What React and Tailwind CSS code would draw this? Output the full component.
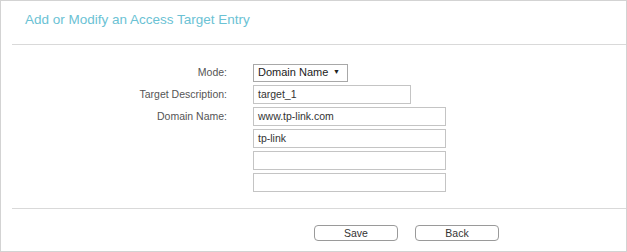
import React from "react";

const rows = [
  { label: "Mode:", kind: "select", value: "Domain Name" },
  { label: "Target Description:", kind: "input", value: "target_1", width: "w-[158px]" },
  { label: "Domain Name:", kind: "input", value: "www.tp-link.com", width: "w-[193px]" },
  { label: "", kind: "input", value: "tp-link", width: "w-[193px]" },
  { label: "", kind: "input", value: "", width: "w-[193px]" },
  { label: "", kind: "input", value: "", width: "w-[193px]" },
];

function Field({ row }) {
  if (row.kind === "select") {
    return (
      <div className="flex h-[18px] w-[95px] items-center justify-between border border-[#a8a8a8] bg-white pl-[4px] pr-[7px] text-[11px] text-[#222]">
        <span>{row.value}</span>
        <span className="text-[7px] text-[#222]">▼</span>
      </div>
    );
  }
  return (
    <div className={`flex h-[19px] ${row.width} items-center border border-[#c4c4c4] bg-white px-[4px] text-[10.5px] text-[#333]`}>
      {row.value}
    </div>
  );
}

export default function App() {
  return (
    <div className="h-[252px] w-[627px] overflow-hidden border border-[#d3d3d3] bg-white font-['Liberation_Sans',Arial,sans-serif]">
      <div className="h-[43px] pl-[24px] pt-[9px] text-[13.5px] text-[#6bc2d4]">
        Add or Modify an Access Target Entry
      </div>
      <div className="ml-[11px] border-t border-[#d9d9d9]" />

      <div className="mt-[18px] flex flex-col gap-[3px]">
        {rows.map((row, idx) => (
          <div key={idx} className="grid h-[19px] grid-cols-[226px_1fr] items-center gap-x-[26px]">
            <div className="text-right text-[10.5px] text-[#555]">{row.label}</div>
            <Field row={row} />
          </div>
        ))}
      </div>

      <div className="ml-[11px] mt-[16px] border-t border-[#d9d9d9]" />

      <div className="mt-[16px] flex gap-[17px] pl-[313px]">
        <button type="button" className="h-[16px] w-[84px] rounded-[4px] border border-[#9a9a9a] bg-white text-[10.5px] leading-none text-[#333]">
          Save
        </button>
        <button type="button" className="h-[16px] w-[84px] rounded-[4px] border border-[#9a9a9a] bg-white text-[10.5px] leading-none text-[#333]">
          Back
        </button>
      </div>
    </div>
  );
}
